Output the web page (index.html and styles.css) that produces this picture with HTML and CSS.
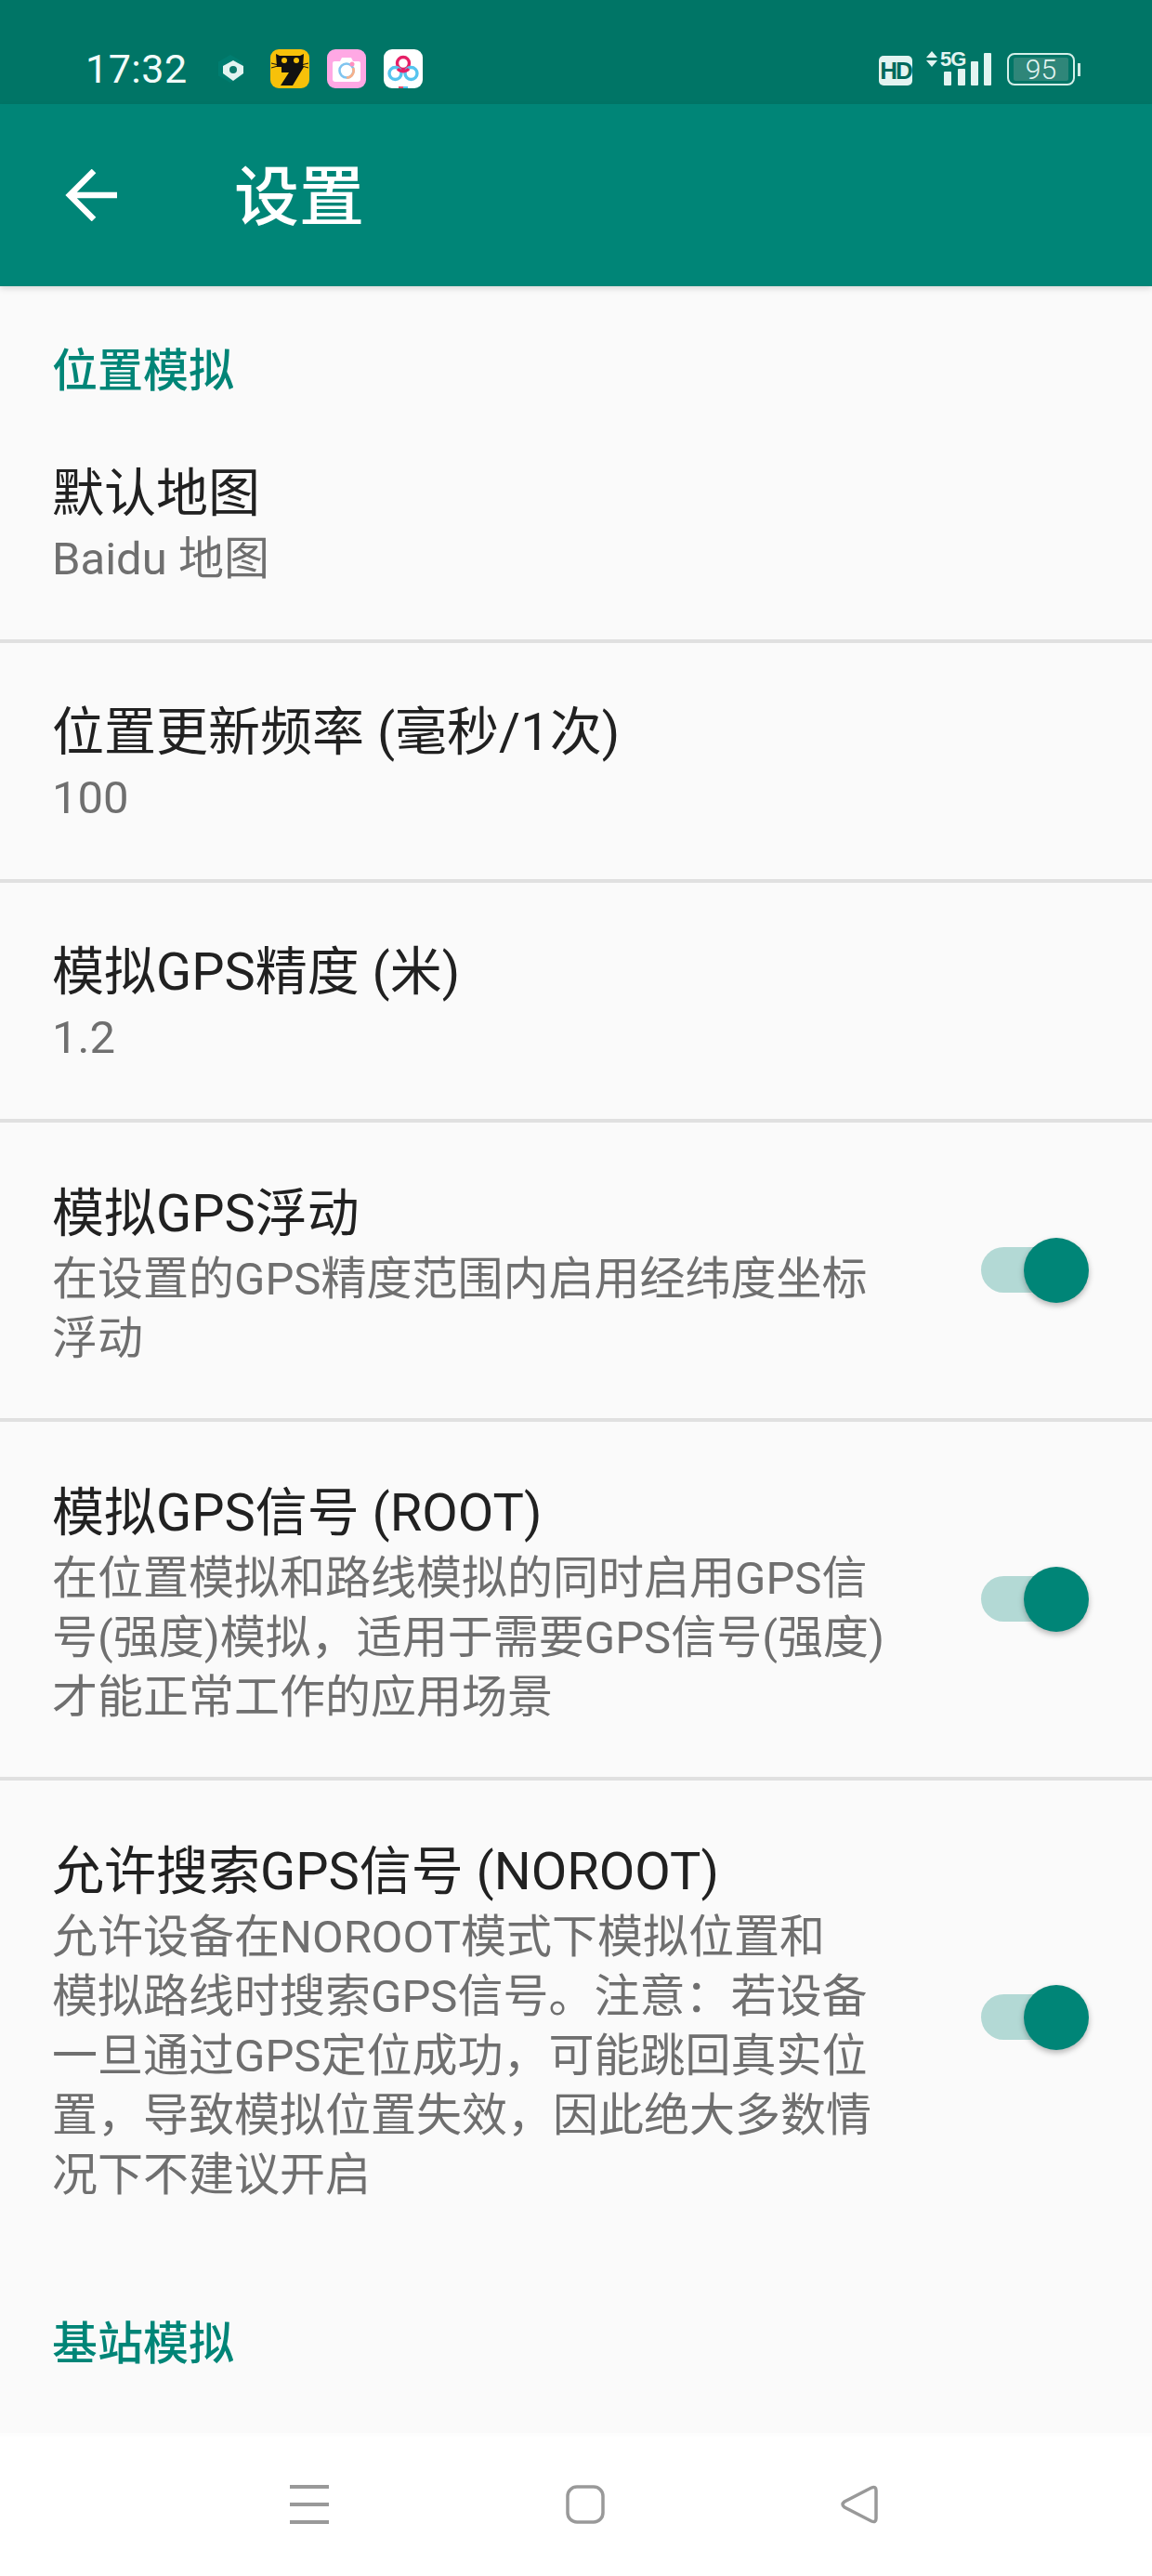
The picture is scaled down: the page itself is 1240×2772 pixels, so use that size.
FILE: index.html
```html
<!DOCTYPE html>
<html lang="zh-CN">
<head>
<meta charset="utf-8">
<title>设置</title>
<link rel="stylesheet" href="styles.css">
</head>
<body>
<div class="phone">
  <header class="status">
    <div class="status-left">
      <span class="time">17:32</span>
      <svg class="ic-loc" viewBox="0 0 30 30"><path d="M15 0 28 7.500V22.500L15 30 2 22.500V7.500Z" fill="#007d70"/><path d="M18 6 29 12V20L18 28 7 20V12Z" fill="#e3f4f1"/><circle cx="18" cy="16" r="4" fill="#0b7a6c"/></svg>
      <svg class="ic-app" viewBox="0 0 42 42"><rect width="42" height="42" rx="9" fill="#f7c10a"/><path d="M6 5 10 7H32L36 5 35 19H7Z" fill="#111"/><path d="M12 19H36L24 39H11L20 25H12Z" fill="#111"/><circle cx="15" cy="12" r="3" fill="#f7c10a"/><circle cx="28" cy="12" r="3" fill="#f7c10a"/><path d="M1 15 9 17M1 20 8 18M41 15 33 17M41 20 34 18" stroke="#111" stroke-width="1"/></svg>
      <svg class="ic-app" viewBox="0 0 42 42"><rect width="42" height="42" rx="9" fill="#ffa8e4"/><path d="M8 13H14L16 9H26L28 13H34A2 2 0 0 1 36 15V32A3 3 0 0 1 33 35H9A3 3 0 0 1 6 32V15A2 2 0 0 1 8 13Z" fill="#fff"/><circle cx="21" cy="23" r="7.500" fill="none" stroke="#7fc4ef" stroke-width="2.600"/><path d="M21 30.500A7.500 7.500 0 0 0 28 20" fill="none" stroke="#f7b08a" stroke-width="2.600"/><circle cx="27" cy="16" r="2.500" fill="#ff8fc0"/></svg>
      <svg class="ic-app" viewBox="0 0 42 42"><rect width="42" height="42" rx="9" fill="#fff"/><circle cx="21" cy="15" r="6.500" fill="none" stroke="#e61f66" stroke-width="3.400"/><circle cx="12.500" cy="26" r="6.500" fill="none" stroke="#55c3ee" stroke-width="3.400"/><circle cx="29.500" cy="26" r="6.500" fill="none" stroke="#55c3ee" stroke-width="3.400"/><path d="M15 21A8 8 0 0 0 27 21" fill="none" stroke="#e61f66" stroke-width="3.400"/><path d="M16 40H21V42H16Z" fill="#e84a6a"/><path d="M21 40H26V42H21Z" fill="#55c3ee"/></svg>
    </div>
    <div class="status-right">
      <span class="hd">HD</span>
      <div class="signal">
        <svg class="arrows" viewBox="0 0 12 17"><path d="M6 0 12 7H0ZM0 10H12L6 17Z" fill="#e3f4f1"/></svg>
        <span class="five-g">5G</span>
        <i class="bar b1"></i><i class="bar b2"></i><i class="bar b3"></i><i class="bar b4"></i>
      </div>
      <div class="battery"><div class="battery-fill">95</div></div>
      <i class="battery-cap"></i>
    </div>
  </header>
  <div class="appbar">
    <svg class="back" viewBox="0 0 56 56"><path d="M4 28H56M31 2 5 28 31 54" fill="none" stroke="#fff" stroke-width="6.500"/></svg>
    <h1 class="appbar-title">设置</h1>
  </div>
  <main class="content">
    <h2 class="section first">位置模拟</h2>
    <div class="pref pref-a">
      <div class="pref-text"><div class="title">默认地图</div><div class="summary">Baidu 地图</div></div>
    </div>
    <div class="pref pref-b">
      <div class="pref-text"><div class="title">位置更新频率 (毫秒/1次)</div><div class="summary">100</div></div>
    </div>
    <div class="pref pref-b">
      <div class="pref-text"><div class="title">模拟GPS精度 (米)</div><div class="summary">1.2</div></div>
    </div>
    <div class="pref pref-c">
      <div class="pref-text"><div class="title">模拟GPS浮动</div><div class="summary">在设置的GPS精度范围内启用经纬度坐标<br>浮动</div></div>
      <div class="switch"><i class="track"></i><i class="thumb"></i></div>
    </div>
    <div class="pref pref-c">
      <div class="pref-text"><div class="title">模拟GPS信号 (ROOT)</div><div class="summary">在位置模拟和路线模拟的同时启用GPS信<br>号(强度)模拟，适用于需要GPS信号(强度)<br>才能正常工作的应用场景</div></div>
      <div class="switch"><i class="track"></i><i class="thumb"></i></div>
    </div>
    <div class="pref pref-c last">
      <div class="pref-text"><div class="title">允许搜索GPS信号 (NOROOT)</div><div class="summary">允许设备在NOROOT模式下模拟位置和<br>模拟路线时搜索GPS信号。注意：若设备<br>一旦通过GPS定位成功，可能跳回真实位<br>置，导致模拟位置失效，因此绝大多数情<br>况下不建议开启</div></div>
      <div class="switch"><i class="track"></i><i class="thumb"></i></div>
    </div>
    <h2 class="section second">基站模拟</h2>
  </main>
  <nav class="navbar">
    <svg class="nav-ic" viewBox="0 0 42 42"><path d="M0 2H42M0 21H42M0 40H42" stroke="#999" stroke-width="4" fill="none"/></svg>
    <svg class="nav-ic gap-a" viewBox="0 0 42 42"><rect x="2" y="2" width="38" height="38" rx="10" fill="none" stroke="#999" stroke-width="3.500"/></svg>
    <svg class="nav-ic gap-b" viewBox="0 0 42 42"><path d="M33 3 4 18Q0 21 4 24L33 39Q38 41 38 36V6Q38 1 33 3Z" fill="none" stroke="#999" stroke-width="3.500"/></svg>
  </nav>
</div>
</body>
</html>
```
FILE: styles.css
```css
* { box-sizing: border-box; }
html, body { margin: 0; padding: 0; }
body { font-family: Roboto, "Noto Sans CJK SC", sans-serif; background: #fafafa; }
.phone { width: 1240px; height: 2772px; display: flex; flex-direction: column; overflow: hidden; }

.status { height: 112px; flex: none; background: #007566; display: flex; justify-content: space-between; padding: 53px 77px 0 92px; align-items: flex-start; }
.status-left { display: flex; align-items: center; height: 42px; }
.time { color: #f2fbf9; font-size: 43px; font-weight: 400; width: 113px; letter-spacing: .5px; }
.ic-loc { width: 30px; height: 30px; margin: 0 28px 0 28px; }
.ic-app { width: 42px; height: 42px; margin-right: 19px; }
.status-right { display: flex; align-items: flex-start; height: 42px; }
.hd { width: 36px; height: 32px; margin-top: 7px; border-radius: 5px; background: #e3f4f1; color: #00695c; font: 700 26px/32px "Liberation Sans", sans-serif; text-align: center; letter-spacing: -2px; }
.signal { position: relative; width: 69px; height: 37px; margin: 2px 18px 0 15px; }
.arrows { position: absolute; left: 0; top: 0; width: 12px; height: 17px; }
.five-g { position: absolute; left: 15px; top: -3px; color: #e3f4f1; font: 700 22px/24px "Liberation Sans", sans-serif; letter-spacing: -1px; }
.bar { position: absolute; bottom: 0; width: 8px; background: #e3f4f1; border-radius: 1px; }
.b1 { left: 19px; height: 15px; }
.b2 { left: 34px; height: 18px; }
.b3 { left: 48px; height: 26px; }
.b4 { left: 62px; height: 35px; }
.battery { width: 73px; height: 35px; margin-top: 4px; border: 2px solid #d5efe9; border-radius: 8px; padding: 3px 5px; }
.battery-fill { height: 25px; background: #2f8679; border-radius: 2px; color: #e3f4f1; font-size: 30px; font-weight: 300; line-height: 25px; text-align: center; }
.battery-cap { width: 3px; height: 14px; margin: 15px 0 0 3px; background: #cfeae4; }

.appbar { height: 196px; flex: none; background: #008577; display: flex; align-items: center; padding-left: 70px; box-shadow: 0 3px 6px rgba(0,0,0,.12); position: relative; }
.back { width: 56px; height: 56px; flex: none; }
.appbar-title { margin: 6px 0 0 126px; color: #fff; font-size: 70px; font-weight: 500; line-height: 80px; }

.content { flex: 1; min-height: 0; background: #fafafa; }
.section { margin: 0; padding-left: 56px; color: #008577; font-size: 49px; font-weight: 500; line-height: 64px; }
.section.first { padding-top: 60px; height: 124px; }
.section.second { height: 64px; margin-top: 61px; }

.pref { display: flex; align-items: center; padding: 0 68px 0 56px; border-bottom: 4px solid #e0e0e0; }
.pref-a { height: 260px; padding-top: 7px; }
.pref-b { height: 258px; padding-top: 3px; }
.pref-c { padding-top: 60px; padding-bottom: 53px; }
.pref.last { border-bottom-color: transparent; }
.pref-text { flex: 1; min-width: 0; }
.title { color: #212121; font-size: 56px; line-height: 77px; white-space: nowrap; }
.summary { color: #6f6f6f; font-size: 49px; line-height: 64px; white-space: nowrap; }

.switch { position: relative; width: 116px; height: 70px; flex: none; margin-bottom: 8px; }
.track { position: absolute; left: 0; top: 10px; width: 100px; height: 49px; border-radius: 25px; background: #b3d9d5; }
.thumb { position: absolute; right: 0; top: 0; width: 70px; height: 70px; border-radius: 50%; background: #008577; box-shadow: 0 3px 6px rgba(0,0,0,.28); }

.navbar { height: 154px; flex: none; background: #fff; border-top: 4px solid #fdfdfd; display: flex; align-items: flex-start; padding: 52px 0 0 312px; }
.nav-ic { width: 42px; height: 42px; flex: none; }
.gap-a { margin-left: 255px; }
.gap-b { margin-left: 254px; }
```
